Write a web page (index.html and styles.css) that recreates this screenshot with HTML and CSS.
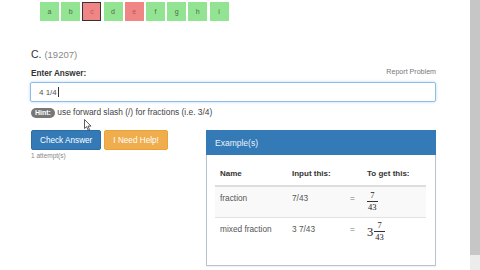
FILE: index.html
```html
<!DOCTYPE html>
<html lang="en">
<head>
    <meta charset="UTF-8">
    <title>Problem C</title>
    <link rel="stylesheet" href="styles.css">
</head>
<body>
    <div class="page">
        <div class="main">
            <div class="letters">
                <span class="tile ok">a</span>
                <span class="tile ok">b</span>
                <span class="tile bad current">c</span>
                <span class="tile ok">d</span>
                <span class="tile bad">e</span>
                <span class="tile ok">f</span>
                <span class="tile ok">g</span>
                <span class="tile ok">h</span>
                <span class="tile ok">i</span>
            </div>

            <h2 class="problem-title">C. <span class="problem-id">(19207)</span></h2>

            <div class="answer-head">
                <label class="answer-label">Enter Answer:</label>
                <a class="report">Report Problem</a>
            </div>
            <div class="answer-box">4 1/4<span class="caret"></span></div>

            <p class="hint"><span class="badge">Hint:</span> use forward slash (/) for fractions (i.e. 3/4)</p>

            <div class="lower">
                <div class="actions">
                    <div class="buttons">
                        <button class="btn btn-blue">Check Answer</button>
                        <button class="btn btn-orange">I Need Help!</button>
                    </div>
                    <div class="attempts">1 attempt(s)</div>
                    <!-- mouse pointer from the capture -->
                    <svg class="pointer" width="8" height="12" viewBox="0 0 8 12">
                        <path d="M0.5 0.5 L0.5 9.5 L2.6 7.6 L4.2 11.2 L5.6 10.6 L4 7.1 L7 7.1 Z" fill="#fff" stroke="#333" stroke-width="0.8"/>
                    </svg>
                </div>

                <div class="panel">
                    <div class="panel-head">Example(s)</div>
                    <div class="panel-body">
                        <table class="examples">
                            <thead>
                                <tr>
                                    <th class="col-name">Name</th>
                                    <th class="col-input">Input this:</th>
                                    <th class="col-eq"></th>
                                    <th class="col-out">To get this:</th>
                                </tr>
                            </thead>
                            <tbody>
                                <tr class="striped">
                                    <td>fraction</td>
                                    <td>7/43</td>
                                    <td class="eq">=</td>
                                    <td class="out">
                                        <span class="math">
                                            <span class="frac"><span class="num">7</span><span class="den">43</span></span>
                                        </span>
                                    </td>
                                </tr>
                                <tr>
                                    <td>mixed fraction</td>
                                    <td>3 7/43</td>
                                    <td class="eq">=</td>
                                    <td class="out">
                                        <span class="math">
                                            <span class="whole">3</span>
                                            <span class="frac"><span class="num">7</span><span class="den">43</span></span>
                                        </span>
                                    </td>
                                </tr>
                            </tbody>
                        </table>
                    </div>
                </div>
            </div>
        </div>

        <div class="scroll-track">
            <div class="scroll-thumb"></div>
        </div>
    </div>
</body>
</html>
```

FILE: styles.css
```css
body {
    margin: 0;
    font-family: "Liberation Sans", Arial, sans-serif;
    background-color: #fff;
    color: #333;
}
.page {
    display: flex;
    width: 480px;
    height: 270px;
    overflow: hidden;
}
.main {
    width: 470px;
    padding: 2px 34px 0 30px;
    box-sizing: border-box;
}

/* letter tiles on top */
.letters {
    display: flex;
    gap: 2.2px;
    margin-left: 10px;
}
.tile {
    width: 19px;
    height: 19px;
    box-sizing: border-box;
    display: flex;
    align-items: center;
    justify-content: center;
    font-size: 7px;
    color: #4d6b4d;
}
.ok {
    background-color: #92e492;
}
.bad {
    background-color: #f08585;
    color: #b85a5a;
}
.current {
    border: 1px solid #333;
}

.problem-title {
    margin: 27px 0 0 1px;
    font-size: 10.5px;
    font-weight: normal;
    color: #333;
    line-height: 12px;
}
.problem-id {
    color: #888;
    font-size: 9.5px;
}

.answer-head {
    display: flex;
    justify-content: space-between;
    align-items: flex-end;
    margin: 6px 0 0 1px;
    line-height: 10px;
}
.answer-label {
    font-size: 8.2px;
    font-weight: bold;
    color: #333;
}
.report {
    font-size: 7.1px;
    color: #777;
    margin-bottom: 2px;
}
.answer-box {
    margin-top: 3px;
    height: 20px;
    border: 1px solid #8fbde6;
    border-radius: 2px;
    box-shadow: 0 0 3px rgba(102, 175, 233, 0.5);
    box-sizing: border-box;
    padding-left: 8px;
    display: flex;
    align-items: center;
    font-size: 8px;
    color: #555;
}
.caret {
    width: 1px;
    height: 10px;
    background-color: #333;
    margin-left: 1px;
}

.hint {
    margin: 5px 0 0 1px;
    font-size: 8.4px;
    line-height: 11px;
    color: #444;
}
.badge {
    display: inline-block;
    background-color: #777;
    color: #fff;
    font-weight: bold;
    font-size: 7px;
    line-height: 10px;
    padding: 0 4px;
    border-radius: 5px;
}

/* buttons + examples */
.lower {
    display: flex;
    justify-content: space-between;
    margin-top: 12px;
}
.actions {
    position: relative;
    padding-left: 1px;
}
.buttons {
    display: flex;
    gap: 3px;
}
.btn {
    font-family: inherit;
    font-size: 8.2px;
    height: 20px;
    padding: 0 8px;
    border-radius: 2px;
    color: #fff;
    border: 1px solid transparent;
}
.btn-blue {
    background-color: #337ab7;
    border-color: #2e6da4;
}
.btn-orange {
    background-color: #f0ad4e;
    border-color: #eea236;
}
.attempts {
    font-size: 6.5px;
    color: #888;
    margin-top: 2px;
}
.pointer {
    position: absolute;
    left: 54px;
    top: -11px;
}

.panel {
    width: 230px;
    height: 136px;
    border: 1px solid #b8c3cc;
    box-sizing: border-box;
    box-shadow: 0 1px 1px rgba(0, 0, 0, 0.05);
}
.panel-head {
    background-color: #337ab7;
    color: #eaf2fa;
    height: 25px;
    padding-left: 9px;
    display: flex;
    align-items: center;
    font-size: 8.5px;
    margin: -1px -1px 0 -1px;
}
.panel-body {
    padding: 9px 9px 0 8px;
}
.examples {
    width: 211px;
    border-collapse: collapse;
    font-size: 8.3px;
}
.examples th {
    text-align: left;
    font-weight: bold;
    font-size: 8px;
    color: #333;
    padding: 5px 5px 6px 5px;
    border-bottom: 2px solid #ddd;
    line-height: 10px;
}
.examples td {
    color: #555;
    padding: 6px 5px 5px 5px;
    line-height: 10px;
    border-top: 1px solid #e2e2e2;
    vertical-align: top;
}
.examples td.out {
    padding-top: 3px;
}
.striped td {
    background-color: #f9f9f9;
}
.col-name {
    width: 62px;
}
.col-input {
    width: 46px;
}
.col-eq {
    width: 9px;
}
.examples td.eq {
    text-align: center;
    color: #777;
}

/* math rendering */
.math {
    display: inline-flex;
    align-items: center;
    font-family: "Liberation Serif", "Times New Roman", serif;
    color: #222;
}
.whole {
    font-size: 12.5px;
    margin-right: 1px;
}
.frac {
    display: inline-flex;
    flex-direction: column;
    align-items: center;
    font-size: 8.5px;
    line-height: 9px;
}
.num {
    padding: 0 1px 1px 1px;
}
.den {
    border-top: 0.8px solid #333;
    padding: 1px 1px 0 1px;
}

.scroll-track {
    width: 10px;
    height: 270px;
    background-color: #ececec;
}
.scroll-thumb {
    height: 255px;
    background-color: #c6c6c6;
}
```
